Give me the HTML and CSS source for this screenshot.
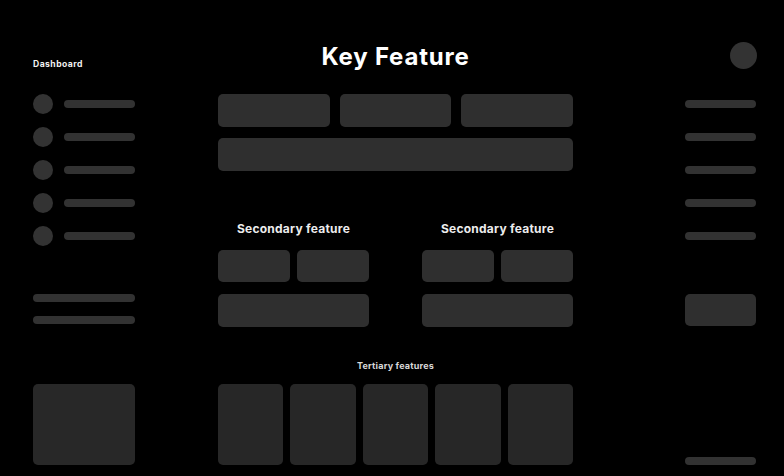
FILE: index.html
```html
<!DOCTYPE html>
<html lang="en">
<head>
<meta charset="utf-8">
<title>Key Feature</title>
<link rel="stylesheet" href="styles.css">
</head>
<body>
<div class="page">
  <aside class="left">
    <div class="dash">Dashboard</div>
    <ul class="nav">
      <li><span class="dot"></span><span class="line"></span></li>
      <li><span class="dot"></span><span class="line"></span></li>
      <li><span class="dot"></span><span class="line"></span></li>
      <li><span class="dot"></span><span class="line"></span></li>
      <li><span class="dot"></span><span class="line"></span></li>
    </ul>
    <div class="lines">
      <span class="line wide"></span>
      <span class="line wide"></span>
    </div>
    <div class="side-card"></div>
  </aside>

  <main class="main">
    <h1 class="title">Key Feature</h1>
    <div class="row three">
      <div class="box"></div>
      <div class="box"></div>
      <div class="box"></div>
    </div>
    <div class="box full"></div>

    <div class="secondary">
      <section class="sec">
        <h2 class="sec-title">Secondary feature</h2>
        <div class="row two">
          <div class="box s"></div>
          <div class="box s"></div>
        </div>
        <div class="box full big"></div>
      </section>
      <section class="sec">
        <h2 class="sec-title">Secondary feature</h2>
        <div class="row two">
          <div class="box s"></div>
          <div class="box s"></div>
        </div>
        <div class="box full big"></div>
      </section>
    </div>

    <h3 class="ter-title">Tertiary features</h3>
    <div class="row five">
      <div class="card"></div>
      <div class="card"></div>
      <div class="card"></div>
      <div class="card"></div>
      <div class="card"></div>
    </div>
  </main>

  <aside class="right">
    <span class="avatar"></span>
    <div class="rlines">
      <span class="line r"></span>
      <span class="line r"></span>
      <span class="line r"></span>
      <span class="line r"></span>
      <span class="line r"></span>
    </div>
    <div class="rbox"></div>
    <span class="line r bottom"></span>
  </aside>
</div>
</body>
</html>
```

FILE: styles.css
```css
html, body {
  margin: 0;
  padding: 0;
  background: #000;
  height: 100%;
}
body {
  font-family: "Inter", "Open Sans", sans-serif;
  color: #fff;
  overflow: hidden;
}
.page {
  display: flex;
  align-items: flex-start;
  padding-left: 33px;
  height: 476px;
}

/* left */
.left {
  width: 102px;
  display: flex;
  flex-direction: column;
}
.dash {
  margin-top: 58px;
  height: 12px;
  line-height: 12px;
  font-size: 8.6px;
  font-weight: 700;
  letter-spacing: 0.45px;
  color: #f2f2f2;
}
.nav {
  list-style: none;
  margin: 24px 0 0;
  padding: 0;
  display: flex;
  flex-direction: column;
  gap: 13px;
}
.nav li {
  display: flex;
  align-items: center;
  height: 20px;
  gap: 11px;
}
.dot {
  width: 20px;
  height: 20px;
  border-radius: 50%;
  background: #333;
  flex: none;
}
.line {
  display: block;
  height: 8px;
  width: 71px;
  border-radius: 4px;
  background: #323232;
}
.lines {
  margin-top: 48px;
  display: flex;
  flex-direction: column;
  gap: 14px;
}
.line.wide {
  width: 102px;
}
.side-card {
  margin-top: 60px;
  height: 81px;
  border-radius: 5px;
  background: #282828;
}

/* main */
.main {
  width: 355px;
  margin-left: 83px;
  display: flex;
  flex-direction: column;
}
.title {
  margin: 42px 0 0;
  height: 30px;
  line-height: 30px;
  font-size: 24px;
  font-weight: 700;
  text-align: center;
  letter-spacing: 0.8px;
}
.row {
  display: grid;
}
.three {
  margin-top: 22px;
  grid-template-columns: repeat(3, 1fr);
  gap: 10px;
}
.box {
  height: 33px;
  border-radius: 5px;
  background: #2f2f2f;
}
.full {
  margin-top: 11px;
}
.secondary {
  display: flex;
  justify-content: space-between;
  margin-top: 50px;
}
.sec {
  width: 151px;
  display: flex;
  flex-direction: column;
}
.sec-title {
  margin: 0;
  height: 16px;
  line-height: 16px;
  font-size: 12px;
  font-weight: 700;
  text-align: center;
  color: #ececec;
  letter-spacing: 0.25px;
}
.two {
  margin-top: 13px;
  grid-template-columns: 1fr 1fr;
  gap: 7px;
}
.box.s {
  height: 32px;
}
.box.big {
  margin-top: 12px;
}
.ter-title {
  margin: 33px 0 0;
  height: 12px;
  line-height: 12px;
  font-size: 9px;
  font-weight: 700;
  text-align: center;
  color: #d8d8d8;
  letter-spacing: 0.2px;
}
.five {
  margin-top: 12px;
  grid-template-columns: repeat(5, 1fr);
  gap: 7px;
}
.card {
  height: 81px;
  border-radius: 5px;
  background: #272727;
}

/* right */
.right {
  width: 72px;
  margin-left: 112px;
  display: flex;
  flex-direction: column;
}
.avatar {
  display: block;
  margin-top: 42px;
  margin-left: auto;
  width: 27px;
  height: 27px;
  border-radius: 50%;
  background: #333;
}
.rlines {
  margin-top: 31px;
  display: flex;
  flex-direction: column;
  gap: 25px;
}
.line.r {
  width: 71px;
}
.rbox {
  margin-top: 54px;
  width: 71px;
  height: 32px;
  border-radius: 5px;
  background: #2f2f2f;
}
.bottom {
  margin-top: 131px;
}
```
